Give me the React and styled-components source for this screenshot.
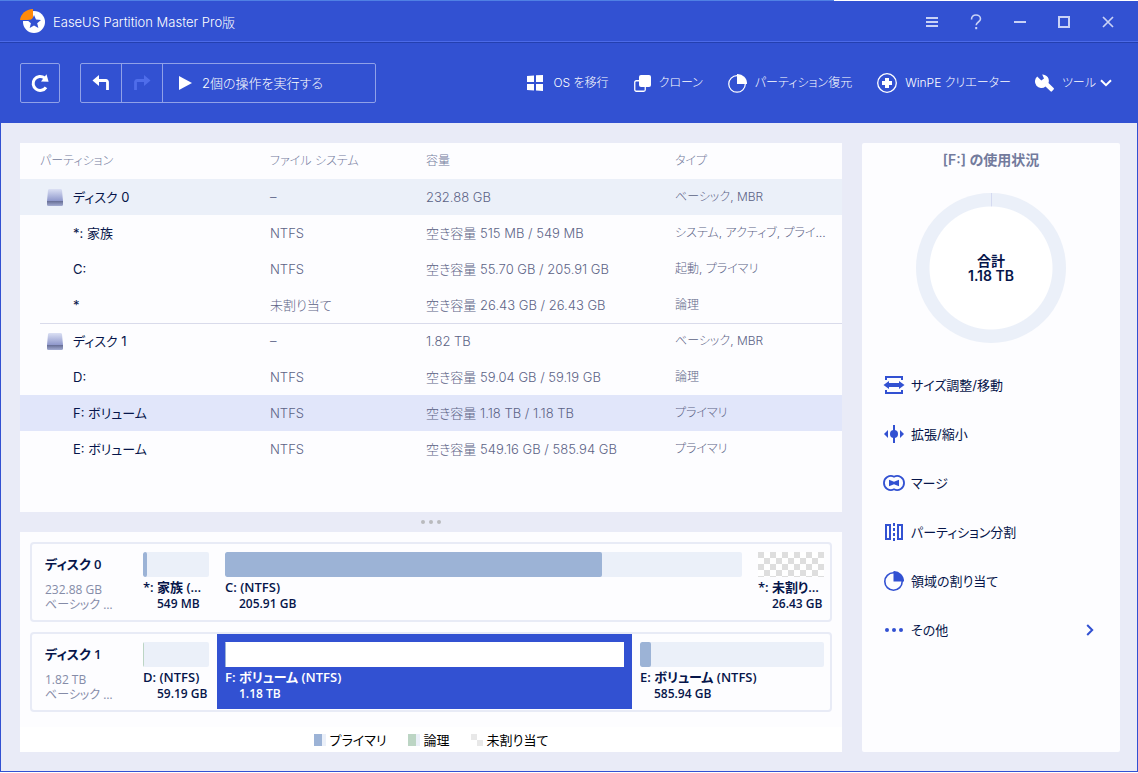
import React from "react";
import styled, { createGlobalStyle, css } from "styled-components";

const c = {
  brand: "#3251d2",
  page: "#e9ebf7",
  panel: "#fdfdff",
  ink: "#06154a",
  body: "#5c6386",
  head: "#737b9d",
  track: "#ebf0f9",
  primary: "#9cb3d6",
  logical: "#bcd5c4",
};

const GlobalStyle = createGlobalStyle`
  *, *::before, *::after { box-sizing: border-box; }
  body { margin: 0; background: #fff; }
  body, button {
    font-family: Inter, "Noto Sans CJK JP", sans-serif;
    font-size: 13px;
    font-weight: 300;
    line-height: 20px;
    font-feature-settings: "palt";
  }
  button {
    padding: 0;
    border: 0;
    background: none;
    color: inherit;
    cursor: pointer;
    white-space: nowrap;
  }
  svg { display: block; flex: none; overflow: visible; }
`;

const Window = styled.div`
  display: flex;
  flex-direction: column;
  min-height: calc(100vh - 1px);
  background: ${c.page};
  border: 1px solid ${c.brand};
  border-top: 0;
`;

const Header = styled.header`
  margin: 0 -1px;
  background: ${c.brand};
  color: #fff;
`;

const TopEdge = styled.div`
  height: 1px;
  background: linear-gradient(to right, #4f80e4 73.3%, #fff 73.3%);
`;

const TitleBar = styled.div`
  display: flex;
  align-items: center;
  height: 41px;
  padding: 1px 22px 0 20px;
  border-bottom: 1px solid #4c6ae8;
`;

const AppTitle = styled.h1`
  flex: 1;
  margin: 0 0 0 7px;
  font-size: 13px;
  font-weight: 300;
`;

const WindowButtons = styled.div`
  display: flex;
  gap: 28px;
  color: #c9d2f6;
`;

const Toolbar = styled.div`
  display: flex;
  align-items: center;
  justify-content: space-between;
  height: 81px;
  padding: 0 26px 0 20px;
  border-top: 1px solid #2440b0;
`;

const ToolGroup = styled.div`
  display: flex;
  align-items: center;
  gap: ${(p) => p.$gap}px;
`;

const boxed = css`
  height: 40px;
  border: 1px solid #90a1e8;
  border-radius: 2px;
`;

const RefreshButton = styled.button`
  ${boxed}
  width: 40px;
  display: grid;
  place-items: center;
`;

const HistoryBox = styled.div`
  ${boxed}
  display: flex;
`;

const HistoryButton = styled.button`
  display: grid;
  place-items: center;
  width: 41px;
  border-right: 1px solid #90a1e8;
  color: ${(p) => (p.disabled ? "#4f6dea" : "#fff")};
`;

const RunButton = styled.button`
  display: flex;
  align-items: center;
  gap: 10px;
  width: 212px;
  padding-left: 16px;
`;

const ToolButton = styled.button`
  display: flex;
  align-items: center;
  gap: 8px;
  font-size: 12px;
`;

const MenuLabel = styled.span`
  display: flex;
  align-items: center;
  gap: 4px;
`;

const Main = styled.main`
  flex: 1;
  display: flex;
  gap: 20px;
  padding: 20px 17px 19px 19px;
`;

const LeftColumn = styled.div`
  flex: 1;
  min-width: 0;
  display: flex;
  flex-direction: column;
`;

const TablePanel = styled.section`
  flex: 1;
  background: ${c.panel};
`;

const PartitionTable = styled.table`
  width: 100%;
  table-layout: fixed;
  border-collapse: collapse;
`;

const Th = styled.th`
  width: ${(p) => (p.$width ? `${p.$width}px` : "auto")};
  height: 36px;
  padding: 0 0 0 20px;
  text-align: left;
  font-size: 12px;
  font-weight: 300;
  color: ${c.head};
`;

const Tr = styled.tr`
  background-color: ${(p) => p.$fill ?? "transparent"};
  ${(p) =>
    p.$divided &&
    css`
      background-image: linear-gradient(#d9dbeb, #d9dbeb);
      background-repeat: no-repeat;
      background-position: right top;
      background-size: calc(100% - 20px) 1px;
    `}
`;

const Td = styled.td`
  height: 36px;
  padding: 0 12px 0 20px;
  overflow: hidden;
  text-overflow: ellipsis;
  white-space: nowrap;
  font-size: ${(p) => (p.$small ? 12 : 13)}px;
  color: ${c.body};
`;

const NameCell = styled.td`
  height: 36px;
  padding: 0 0 0 ${(p) => (p.$disk ? 27 : 53)}px;
  white-space: nowrap;
  font-weight: 400;
  color: ${c.ink};
`;

const DiskName = styled.span`
  display: flex;
  align-items: center;
  gap: 10px;
`;

const Splitter = styled.div`
  display: flex;
  align-items: center;
  justify-content: center;
  gap: 4px;
  height: 20px;
`;

const Dot = styled.span`
  width: 4px;
  height: 4px;
  border-radius: 50%;
  background: #b9babd;
`;

const MapPanel = styled.section`
  background: ${c.panel};
`;

const DiskList = styled.div`
  display: flex;
  flex-direction: column;
  gap: 10px;
  padding: 10px 10px 15px;
  font-family: "Open Sans", "Noto Sans CJK JP", sans-serif;
`;

const DiskCard = styled.div`
  display: flex;
  height: 80px;
  border: 2px solid #e8ebf6;
  border-radius: 4px;
`;

const DiskInfo = styled.div`
  flex: none;
  width: 103px;
  padding: 10px 22px 0 13px;
  font-size: 12px;
  font-weight: 400;
  line-height: 15px;
  color: #858ca8;
`;

const DiskTitle = styled.h2`
  margin: 0 0 8px;
  font-size: 13px;
  font-weight: 600;
  line-height: 20px;
  color: ${c.ink};
`;

const Clip = styled.div`
  overflow: hidden;
  text-overflow: ellipsis;
  white-space: nowrap;
`;

const Part = styled.button`
  flex: ${(p) => p.$grow ?? 0} 1 ${(p) => (p.$grow ? 0 : 82)}px;
  min-width: 0;
  height: 75px;
  padding: 8px 8px 0;
  display: flex;
  flex-direction: column;
  text-align: left;
  font-family: inherit;
  font-weight: 600;
  color: ${(p) => (p.$selected ? "#fff" : c.ink)};
  background: ${(p) => (p.$selected ? c.brand : "transparent")};
  &:last-child { padding-right: 6px; flex-basis: ${(p) => (p.$grow ? 0 : 80)}px; }
`;

const Bar = styled.span`
  flex: none;
  display: block;
  width: 100%;
  height: 25px;
  overflow: hidden;
  border-radius: ${(p) => (p.$selected || p.$empty ? 0 : 2)}px;
  background: ${(p) =>
    p.$empty
      ? "repeating-conic-gradient(#fff 0 25%, #dedede 0 50%) 0 0 / 12px 12px"
      : p.$selected
      ? "#fff"
      : c.track};
`;

const Fill = styled.span`
  display: block;
  height: 100%;
  min-width: 1px;
  border-radius: 2px;
  background: ${(p) => p.$color};
`;

const PartName = styled(Clip).attrs({ as: "span" })`
  width: 100%;
  font-size: 13px;
  line-height: 20px;
`;

const PartSize = styled.span`
  padding-left: 14px;
  font-size: 12px;
  line-height: 14px;
`;

const Legend = styled.div`
  display: flex;
  justify-content: center;
  align-items: center;
  gap: 21px;
  height: 25px;
  background: #fff;
  color: #000;
  font-weight: 400;
`;

const LegendItem = styled.span`
  display: flex;
  align-items: center;
  gap: 4px;
`;

const Swatch = styled.span`
  width: 12px;
  height: 12px;
  background: ${(p) =>
    p.$color
      ? `linear-gradient(to right, ${p.$color} 8px, ${c.track} 8px)`
      : "repeating-conic-gradient(#fff 0 25%, #e8e8e8 0 50%) 0 0 / 12px 12px"};
`;

const Side = styled.aside`
  flex: none;
  width: 258px;
  border-radius: 2px;
  background: ${c.panel};
  color: ${c.ink};
`;

const SideTitle = styled.h2`
  margin: 7px 0 23px;
  text-align: center;
  font-size: 14px;
  font-weight: 600;
  line-height: 20px;
  color: ${c.head};
`;

const Ring = styled.div`
  display: flex;
  flex-direction: column;
  align-items: center;
  justify-content: center;
  width: 150px;
  height: 150px;
  margin: 0 auto;
  border-radius: 50%;
  background:
    radial-gradient(circle, #fff 61px, transparent 62px),
    linear-gradient(#d5daf1, #d5daf1) center top / 1px 14px no-repeat,
    ${c.track};
  font-size: 14px;
  font-weight: 600;
  line-height: 15px;
`;

const Actions = styled.div`
  display: flex;
  flex-direction: column;
  padding: 17px 26px 0 22px;
`;

const Action = styled.button`
  display: flex;
  align-items: center;
  height: 49px;
  gap: 7px;
  font-weight: 400;
`;

const ActionLabel = styled.span`
  flex: 1;
  text-align: left;
`;

const Tint = styled.span`
  color: ${c.brand};
`;

const Logo = () => (
  <svg width="26" height="26" viewBox="0 0 26 26">
    <circle cx="14" cy="13" r="11" fill="#fff" />
    <path d="M0 0H13V12H0z" fill={c.brand} />
    <path d="M13 0v9l-2.200 2H0C.5 5 6 .2 13 0z" fill="#ff8a0a" />
    <path d="M14 6l2 4.600 5 .4-3.800 3.200 1.200 4.900-4.400-2.600-4.300 2.600 1.200-4.900L7.100 11l5-.4z" fill={c.brand} />
  </svg>
);

const RefreshIcon = () => (
  <svg width="20" height="20" viewBox="0 0 20 20">
    <path d="M16 14.300A7 7 0 1 1 14.600 5" fill="none" stroke="#fff" strokeWidth="3" />
    <path d="M16.500 1.200L18.600 8.800 11 8.600z" fill="#fff" />
  </svg>
);

const UndoIcon = ({ flip }) => (
  <svg width="18" height="16" viewBox="0 0 18 16">
    <g transform={flip ? "translate(18 0) scale(-1 1)" : undefined}>
      <path d="M5 5.500H14a1.500 1.500 0 0 1 1.500 1.500V15" fill="none" stroke="currentColor" strokeWidth="2.800" />
      <path d="M7 0v11L.5 5.500z" fill="currentColor" />
    </g>
  </svg>
);

const PlayIcon = () => (
  <svg width="13" height="14" viewBox="0 0 13 14"><path d="M0 0l13 7-13 7z" fill="#fff" /></svg>
);

const WindowsIcon = () => (
  <svg width="18" height="16" viewBox="0 0 18 16" fill="#fff">
    <path d="M0 1l7-.6V7H0zM9 .3L16 0v7H9zM0 9h7v6.500L0 15zM9 9h7v7l-7-.4z" />
  </svg>
);

const CloneIcon = () => (
  <svg width="17" height="17" viewBox="0 0 17 17">
    <rect x=".75" y="5.750" width="10.500" height="10.500" rx="1.500" fill="none" stroke="#fff" strokeWidth="1.300" />
    <rect x="5" y="0" width="12" height="12" rx="2" fill="#fff" />
  </svg>
);

const PieIcon = ({ size, stroke }) => (
  <svg width={size} height={size} viewBox="0 0 20 20">
    <circle cx="9.500" cy="10.500" r="8.700" fill="none" stroke="currentColor" strokeWidth={stroke} />
    <path d="M9.500 0A10 10 0 0 1 20 10.500H9.500z" fill="currentColor" />
  </svg>
);

const PlusIcon = () => (
  <svg width="20" height="20" viewBox="0 0 20 20">
    <circle cx="10" cy="10" r="9.300" fill="none" stroke="#fff" strokeWidth="1.300" />
    <path d="M8 5h4v3h3v4h-3v3H8v-3H5V8h3z" fill="#fff" />
  </svg>
);

const WrenchIcon = () => (
  <svg width="18" height="18" viewBox="0 0 18 18">
    <path d="M1.200 2.600L5.300 6.400 8 4.500 6.200.6A6.300 6.300 0 0 1 12.500 9L17.600 14a1 1 0 0 1 0 1.500L16 17.300a1 1 0 0 1-1.500 0L9.500 12.400A6.300 6.300 0 0 1 1.200 2.600z" fill="#fff" />
  </svg>
);

const ChevronDown = () => (
  <svg width="12" height="8" viewBox="0 0 12 8"><path d="M1 1.200l5 5 5-5" fill="none" stroke="#fff" strokeWidth="2" /></svg>
);

const ChevronRight = () => (
  <svg width="8" height="12" viewBox="0 0 8 12"><path d="M1.200 1l5 5-5 5" fill="none" stroke={c.brand} strokeWidth="2" /></svg>
);

const WindowIcon = ({ kind }) => (
  <svg width="16" height="16" viewBox="0 0 16 16" fill="none" stroke="currentColor" strokeWidth="2">
    {kind === "menu" && <path d="M2 4h12M2 8h12M2 12h12" />}
    {kind === "help" && (
      <>
        <path d="M3.500 5.500C3.500 2.500 5.500 1 8 1s4.500 1.600 4.500 4c0 3-4.300 3-4.300 6.200" strokeWidth="1.600" />
        <path d="M7.200 13h2v2.200h-2z" fill="currentColor" stroke="none" />
      </>
    )}
    {kind === "minimize" && <path d="M2 8h12" />}
    {kind === "maximize" && <path d="M3 3h10v10H3z" />}
    {kind === "close" && <path d="M3 3l10 10M13 3L3 13" strokeWidth="1.700" />}
  </svg>
);

const DiskIcon = ({ id }) => (
  <svg width="16" height="17" viewBox="0 0 16 17">
    <defs>
      <linearGradient id={id} x1="0" y1="0" x2="0" y2="1">
        <stop offset="0" stopColor="#dbe0f4" />
        <stop offset="1" stopColor="#8e97cb" />
      </linearGradient>
      <linearGradient id={`${id}-base`} x1="0" y1="0" x2="0" y2="1">
        <stop offset="0" stopColor="#656c94" />
        <stop offset="1" stopColor="#a3acd2" />
      </linearGradient>
    </defs>
    <path d="M2.500 0h11a1.500 1.500 0 0 1 1.500 1.300L16 12H0L1 1.300A1.500 1.500 0 0 1 2.500 0z" fill={`url(#${id})`} />
    <path d="M0 12h16v3.500a1.500 1.500 0 0 1-1.500 1.500h-13A1.500 1.500 0 0 1 0 15.500z" fill={`url(#${id}-base)`} />
  </svg>
);

const ActionIcon = ({ kind }) => (
  <svg width="20" height="20" viewBox="0 0 20 20" fill="none" stroke="currentColor" strokeWidth="2">
    {kind === "resize" && (
      <>
        <path d="M2 5V2h16v3M2 15v3h16v-3" />
        <path d="M4 10h12" strokeWidth="4" />
        <path d="M-.5 10l5.500-4v8zM20.500 10l-5.500-4v8z" fill="currentColor" stroke="none" />
      </>
    )}
    {kind === "extend" && (
      <>
        <path d="M10 1v18" />
        <path d="M0 10l4-4v8zM20 10l-4-4v8z" fill="currentColor" stroke="none" />
        <circle cx="10" cy="10" r="4" fill="currentColor" stroke="none" />
      </>
    )}
    {kind === "merge" && (
      <>
        <path d="M10 3.700A7 7 0 1 0 10 16.300A7 7 0 1 0 10 3.700z" strokeWidth="1.800" />
        <path d="M5 6.800l5 2 5-2v6.400l-5-2-5 2z" fill="currentColor" stroke="none" />
      </>
    )}
    {kind === "split" && (
      <>
        <path d="M2 3h4v14H2zM14 3h4v14h-4z" />
        <path d="M10 1v18" strokeDasharray="3 2" />
      </>
    )}
    {kind === "more" && (
      <g fill="currentColor" stroke="none">
        <circle cx="3" cy="10" r="2" />
        <circle cx="10" cy="10" r="2" />
        <circle cx="17" cy="10" r="2" />
      </g>
    )}
  </svg>
);

const windowButtons = [
  ["menu", "メニュー"],
  ["help", "ヘルプ"],
  ["minimize", "最小化"],
  ["maximize", "最大化"],
  ["close", "閉じる"],
];

const rows = [
  { disk: true, name: "ディスク 0", fs: "–", size: "232.88 GB", type: "ベーシック, MBR", fill: c.track },
  { name: "*: 家族", fs: "NTFS", size: "空き容量 515 MB / 549 MB", type: "システム, アクティブ, プライマリ" },
  { name: "C:", fs: "NTFS", size: "空き容量 55.70 GB / 205.91 GB", type: "起動, プライマリ" },
  { name: "*", fs: "未割り当て", size: "空き容量 26.43 GB / 26.43 GB", type: "論理" },
  { disk: true, divided: true, name: "ディスク 1", fs: "–", size: "1.82 TB", type: "ベーシック, MBR" },
  { name: "D:", fs: "NTFS", size: "空き容量 59.04 GB / 59.19 GB", type: "論理" },
  { name: "F: ボリューム", fs: "NTFS", size: "空き容量 1.18 TB / 1.18 TB", type: "プライマリ", fill: "#e1e6fa" },
  { name: "E: ボリューム", fs: "NTFS", size: "空き容量 549.16 GB / 585.94 GB", type: "プライマリ" },
];

const disks = [
  {
    name: "ディスク 0",
    size: "232.88 GB",
    parts: [
      { name: "*: 家族 (NTFS)", size: "549 MB", used: 6, color: c.primary },
      { name: "C: (NTFS)", size: "205.91 GB", used: 73, color: c.primary, grow: 1 },
      { name: "*: 未割り当て", size: "26.43 GB", empty: true },
    ],
  },
  {
    name: "ディスク 1",
    size: "1.82 TB",
    parts: [
      { name: "D: (NTFS)", size: "59.19 GB", used: 1, color: c.logical },
      { name: "F: ボリューム (NTFS)", size: "1.18 TB", used: 0, color: c.primary, grow: 399, selected: true },
      { name: "E: ボリューム (NTFS)", size: "585.94 GB", used: 6, color: c.primary, grow: 184 },
    ],
  },
];

const actions = [
  ["resize", "サイズ調整/移動"],
  ["extend", "拡張/縮小"],
  ["merge", "マージ"],
  ["split", "パーティション分割"],
  ["allocate", "領域の割り当て"],
  ["more", "その他"],
];

export default function App() {
  return (
    <Window>
      <GlobalStyle />
      <Header>
        <TopEdge />
        <TitleBar>
          <Logo />
          <AppTitle>EaseUS Partition Master Pro版</AppTitle>
          <WindowButtons>
            {windowButtons.map(([kind, label]) => (
              <button key={kind} aria-label={label}><WindowIcon kind={kind} /></button>
            ))}
          </WindowButtons>
        </TitleBar>
        <Toolbar>
          <ToolGroup $gap={20}>
            <RefreshButton aria-label="更新"><RefreshIcon /></RefreshButton>
            <HistoryBox>
              <HistoryButton aria-label="元に戻す"><UndoIcon /></HistoryButton>
              <HistoryButton aria-label="やり直し" disabled><UndoIcon flip /></HistoryButton>
              <RunButton><PlayIcon />2個の操作を実行する</RunButton>
            </HistoryBox>
          </ToolGroup>
          <ToolGroup $gap={25}>
            <ToolButton><WindowsIcon />OS を移行</ToolButton>
            <ToolButton><CloneIcon />クローン</ToolButton>
            <ToolButton><PieIcon size={19} stroke={1.3} />パーティション復元</ToolButton>
            <ToolButton><PlusIcon />WinPE クリエーター</ToolButton>
            <ToolButton><WrenchIcon /><MenuLabel>ツール<ChevronDown /></MenuLabel></ToolButton>
          </ToolGroup>
        </Toolbar>
      </Header>
      <Main>
        <LeftColumn>
          <TablePanel>
            <PartitionTable>
              <thead>
                <tr>
                  <Th $width={230}>パーティション</Th>
                  <Th $width={156}>ファイル システム</Th>
                  <Th $width={249}>容量</Th>
                  <Th>タイプ</Th>
                </tr>
              </thead>
              <tbody>
                {rows.map((r) => (
                  <Tr key={r.name} $fill={r.fill} $divided={r.divided}>
                    <NameCell $disk={r.disk}>
                      {r.disk ? (
                        <DiskName><DiskIcon id={`disk-${r.name.slice(-1)}`} />{r.name}</DiskName>
                      ) : r.name}
                    </NameCell>
                    <Td>{r.fs}</Td>
                    <Td>{r.size}</Td>
                    <Td $small>{r.type}</Td>
                  </Tr>
                ))}
              </tbody>
            </PartitionTable>
          </TablePanel>
          <Splitter><Dot /><Dot /><Dot /></Splitter>
          <MapPanel>
            <DiskList>
              {disks.map((d) => (
                <DiskCard key={d.name}>
                  <DiskInfo>
                    <DiskTitle>{d.name}</DiskTitle>
                    <Clip>{d.size}</Clip>
                    <Clip>ベーシック MBR</Clip>
                  </DiskInfo>
                  {d.parts.map((p) => (
                    <Part key={p.name} $grow={p.grow} $selected={p.selected}>
                      <Bar $empty={p.empty} $selected={p.selected}>
                        {!p.empty && <Fill $color={p.color} style={{ width: `${p.used}%` }} />}
                      </Bar>
                      <PartName>{p.name}</PartName>
                      <PartSize>{p.size}</PartSize>
                    </Part>
                  ))}
                </DiskCard>
              ))}
            </DiskList>
            <Legend>
              <LegendItem><Swatch $color={c.primary} />プライマリ</LegendItem>
              <LegendItem><Swatch $color={c.logical} />論理</LegendItem>
              <LegendItem><Swatch />未割り当て</LegendItem>
            </Legend>
          </MapPanel>
        </LeftColumn>
        <Side>
          <SideTitle>[F:] の使用状況</SideTitle>
          <Ring><span>合計</span><span>1.18 TB</span></Ring>
          <Actions>
            {actions.map(([kind, label]) => (
              <Action key={kind}>
                <Tint>
                  {kind === "allocate" ? <PieIcon size={20} stroke={1.6} /> : <ActionIcon kind={kind} />}
                </Tint>
                <ActionLabel>{label}</ActionLabel>
                {kind === "more" && <ChevronRight />}
              </Action>
            ))}
          </Actions>
        </Side>
      </Main>
    </Window>
  );
}
